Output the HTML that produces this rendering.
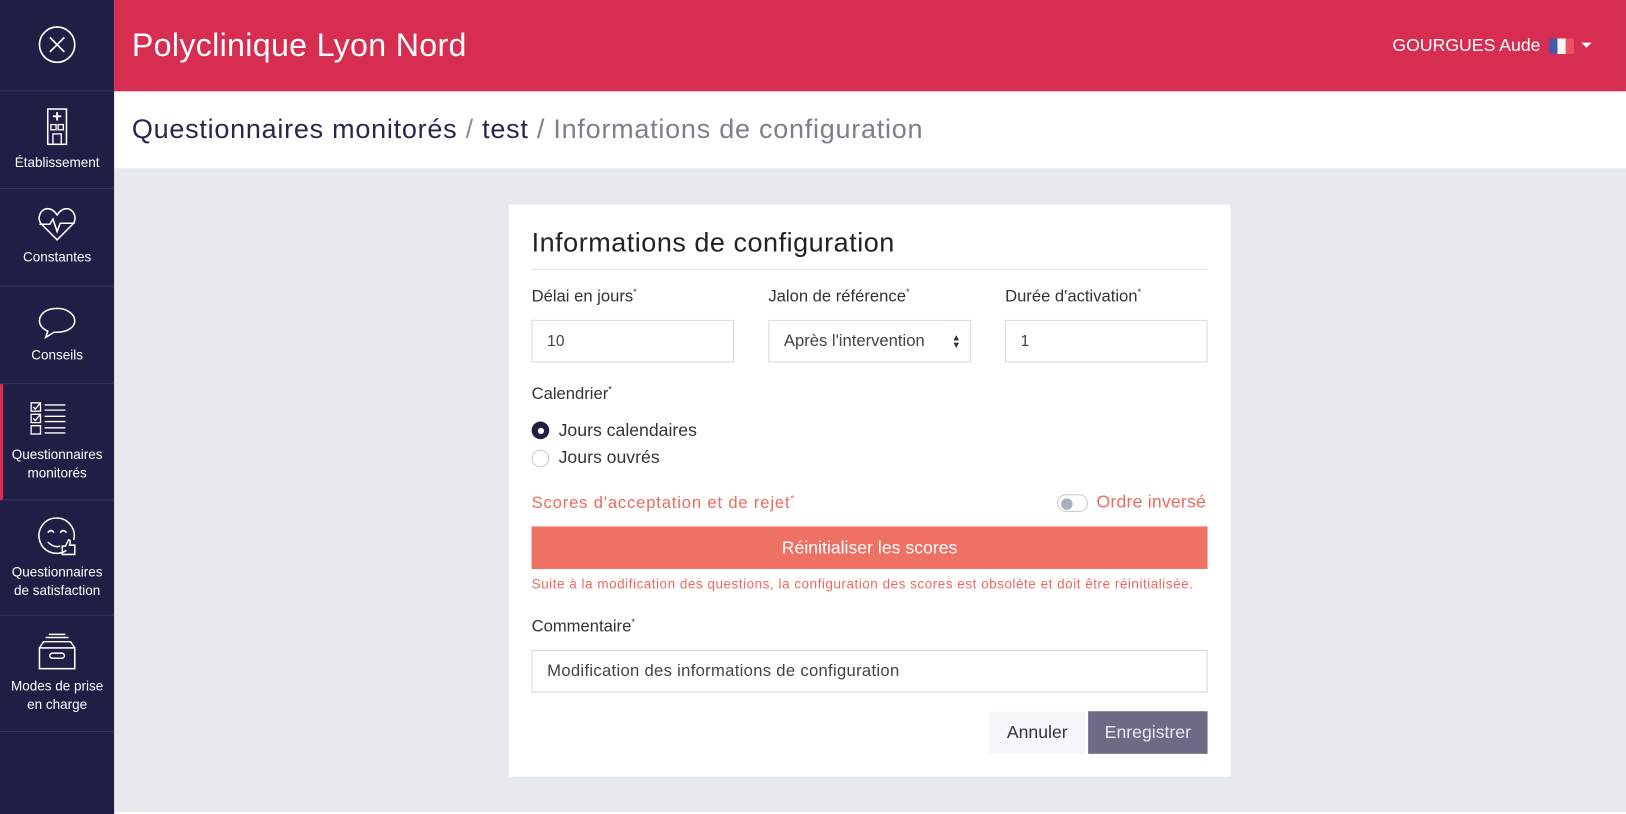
<!DOCTYPE html>
<html><head><meta charset="utf-8">
<style>
*{box-sizing:border-box;margin:0;padding:0}
html,body{width:1626px;height:814px;overflow:hidden;background:#fff;font-family:"Liberation Sans",sans-serif}
#w{position:absolute;left:0;top:0;width:1566px;height:784px;transform:scale(1.0383);transform-origin:0 0}
.abs{position:absolute}
#side{left:0;top:0;width:110px;height:784px;background:#1f1e45}
.it{position:absolute;left:0;width:110px;border-bottom:1px solid #34335c;color:#fff;font-size:13px;text-align:center;line-height:18px}
.it svg{display:block;margin:0 auto}
#hdr{left:110px;top:0;width:1456px;height:88px;background:#d72d51;color:#fff}
#crumb{left:110px;top:88px;width:1456px;height:74px;background:#fff}
#bg{left:110px;top:162px;width:1456px;height:620px;background:#e7eaed}
#card{left:490px;top:197px;width:695px;height:551px;background:#fff}
.lbl{position:absolute;font-size:16px;color:#333}
.inp{position:absolute;height:41px;border:1px solid #d6d9dd;background:#fff;font-size:15px;color:#444;padding-left:14px;line-height:40px}
.sal{color:#ec6a5e}
</style></head><body><div id="w">
<div id="side" class="abs">
  <div class="it" style="top:0;height:88px">
    <svg width="38" height="38" viewBox="0 0 38 38" style="margin-top:24px"><circle cx="19" cy="19" r="17" fill="none" stroke="#fff" stroke-width="1.6"/><path d="M12 12L26 26M26 12L12 26" stroke="#fff" stroke-width="1.6"/></svg>
  </div>
  <div class="it" style="top:88px;height:94px">
    <svg width="22" height="36" viewBox="0 0 22 36" style="margin-top:16px"><rect x="2" y="1" width="18" height="34" fill="none" stroke="#fff" stroke-width="1.5"/><path d="M11 4v8M7 8h8" stroke="#fff" stroke-width="1.8"/><rect x="5" y="16" width="5" height="5" fill="none" stroke="#fff" stroke-width="1.3"/><rect x="12" y="16" width="5" height="5" fill="none" stroke="#fff" stroke-width="1.3"/><rect x="7" y="25" width="8" height="10" fill="none" stroke="#fff" stroke-width="1.3"/></svg>
    <div style="margin-top:8px">Établissement</div>
  </div>
  <div class="it" style="top:182px;height:94px">
    <svg width="38" height="34" viewBox="0 0 38 34" style="margin-top:17px"><path d="M19 32L4 17C-1 11 3 2 10 2c4 0 7 3 9 6c2-3 5-6 9-6c7 0 11 9 6 15z" fill="none" stroke="#fff" stroke-width="1.5"/><path d="M2 17h10l3-5l4 12l3-8h14" fill="none" stroke="#fff" stroke-width="1.5"/></svg>
    <div style="margin-top:6px">Constantes</div>
  </div>
  <div class="it" style="top:276px;height:94px">
    <svg width="38" height="34" viewBox="0 0 38 34" style="margin-top:18px"><path d="M19 3C9 3 2 8 2 15c0 5 4 8 8 10l-2 6l8-5c1 0 2 0 3 0c10 0 17-5 17-11S29 3 19 3z" fill="none" stroke="#fff" stroke-width="1.5"/></svg>
    <div style="margin-top:5px">Conseils</div>
  </div>
  <div class="it" style="top:370px;height:112px;border-left:3px solid #d72d51">
    <svg width="36" height="34" viewBox="0 0 36 34" style="margin-top:17px;margin-left:26px"><rect x="1" y="1" width="9" height="8" fill="none" stroke="#fff" stroke-width="1.3"/><rect x="1" y="12" width="9" height="8" fill="none" stroke="#fff" stroke-width="1.3"/><rect x="1" y="23" width="9" height="8" fill="none" stroke="#fff" stroke-width="1.3"/><path d="M3 5l2 2l5-6M3 16l2 2l5-6" fill="none" stroke="#fff" stroke-width="1.3"/><path d="M14 3h20M14 8h20M14 14h20M14 19h20M14 25h20M14 30h20" stroke="#fff" stroke-width="1.3"/></svg>
    <div style="margin-top:8px;margin-left:-3px">Questionnaires<br>monitorés</div>
  </div>
  <div class="it" style="top:482px;height:111px">
    <svg width="38" height="38" viewBox="0 0 38 38" style="margin-top:16px"><path d="M28 32A17 17 0 1 1 35 22" fill="none" stroke="#fff" stroke-width="1.5"/><path d="M10 15q3-4 6 0M22 15q3-4 6 0M10 24q6 6 12 4" fill="none" stroke="#fff" stroke-width="1.5"/><path d="M24 36v-8h3l3-6c2 0 2 2 1 5h5v9z" fill="none" stroke="#fff" stroke-width="1.5"/></svg>
    <div style="margin-top:6px">Questionnaires<br>de satisfaction</div>
  </div>
  <div class="it" style="top:593px;height:112px">
    <svg width="38" height="36" viewBox="0 0 38 36" style="margin-top:17px"><path d="M11 1h16M8 4h22M6 8h26M2 14L6 8h26l4 6" fill="none" stroke="#fff" stroke-width="1.4"/><rect x="2" y="14" width="34" height="20" fill="none" stroke="#fff" stroke-width="1.5"/><rect x="12" y="19" width="14" height="5" rx="2.5" fill="none" stroke="#fff" stroke-width="1.4"/></svg>
    <div style="margin-top:6px">Modes de prise<br>en charge</div>
  </div>
</div>
<div id="hdr" class="abs">
  <div class="abs" style="left:17px;top:26px;font-size:31px;letter-spacing:0.3px">Polyclinique Lyon Nord</div>
  <div class="abs" style="left:1231px;top:34px;font-size:17px">GOURGUES Aude</div>
  <div class="abs" style="left:1382px;top:37px;width:24px;height:15px;display:flex;border-radius:2px;overflow:hidden"><span style="flex:1;background:#4459a8"></span><span style="flex:1;background:#f4f6fb"></span><span style="flex:1;background:#ee5060"></span></div>
  <div class="abs" style="left:1413px;top:41px;width:0;height:0;border-left:5px solid transparent;border-right:5px solid transparent;border-top:5px solid #fff"></div>
</div>
<div id="crumb" class="abs">
  <div class="abs" style="left:17px;top:21px;font-size:26px;color:#27264d;white-space:nowrap;letter-spacing:0.72px">Questionnaires monitorés <span style="color:#8a9099">/</span> test <span style="color:#7b818a">/ Informations de configuration</span></div>
</div>
<div id="bg" class="abs"></div>
<div id="card" class="abs">
  <div class="abs" style="left:22px;top:21px;font-size:26px;color:#222;letter-spacing:0.5px">Informations de configuration</div>
  <div class="abs" style="left:22px;top:62px;width:651px;height:1px;background:#dfe3e7"></div>
  <div class="lbl" style="left:22px;top:79px">Délai en jours<sup style="font-size:9px">*</sup></div>
  <div class="lbl" style="left:250px;top:79px">Jalon de référence<sup style="font-size:9px">*</sup></div>
  <div class="lbl" style="left:478px;top:79px">Durée d'activation<sup style="font-size:9px">*</sup></div>
  <div class="inp" style="left:22px;top:111px;width:195px">10</div>
  <div class="inp" style="left:250px;top:111px;width:195px;font-size:16px;overflow:hidden;white-space:nowrap;padding-right:24px">Après l'intervention<span class="abs" style="right:0;top:0;width:26px;height:39px;background:#fff;text-align:center;font-size:9px;line-height:7px;padding-top:13px;color:#333">▲<br>▼</span></div>
  <div class="inp" style="left:478px;top:111px;width:195px">1</div>
  <div class="lbl" style="left:22px;top:173px">Calendrier<sup style="font-size:9px">*</sup></div>
  <div class="abs" style="left:22px;top:209px;width:17px;height:17px;border-radius:50%;background:#1f1e45"><div style="margin:5.5px;width:6px;height:6px;border-radius:50%;background:#fff"></div></div>
  <div class="lbl" style="left:48px;top:208px;font-size:17px">Jours calendaires</div>
  <div class="abs" style="left:22px;top:236px;width:17px;height:17px;border-radius:50%;border:1px solid #c8ccd1"></div>
  <div class="lbl" style="left:48px;top:234px;font-size:17px">Jours ouvrés</div>
  <div class="lbl sal" style="left:22px;top:278px;color:#ec6a5e;letter-spacing:0.8px">Scores d'acceptation et de rejet<sup style="font-size:9px">*</sup></div>
  <div class="abs" style="left:528px;top:279px;width:30px;height:17px;border-radius:9px;border:1px solid #c5c9ce"><div style="margin:2.5px;width:11px;height:11px;border-radius:50%;background:#aab0b7"></div></div>
  <div class="lbl sal" style="left:566px;top:277px;font-size:17px;color:#ec6a5e;letter-spacing:0.2px">Ordre inversé</div>
  <div class="abs" style="left:22px;top:310px;width:651px;height:41px;background:#ee7164;color:#fff;font-size:17px;text-align:center;line-height:41px">Réinitialiser les scores</div>
  <div class="abs" style="left:22px;top:358px;font-size:13px;color:#ec6a5e;white-space:nowrap;letter-spacing:0.5px">Suite à la modification des questions, la configuration des scores est obsolète et doit être réinitialisée.</div>
  <div class="lbl" style="left:22px;top:397px">Commentaire<sup style="font-size:9px">*</sup></div>
  <div class="inp" style="left:22px;top:429px;width:651px;font-size:16px;letter-spacing:0.3px">Modification des informations de configuration</div>
  <div class="abs" style="left:463px;top:488px;width:92px;height:41px;background:#f6f7f9;color:#333;font-size:17px;text-align:center;line-height:41px">Annuler</div>
  <div class="abs" style="left:558px;top:488px;width:115px;height:41px;background:#6c6a85;color:#e8e8f0;font-size:17px;text-align:center;line-height:41px">Enregistrer</div>
</div>
</div></body></html>
